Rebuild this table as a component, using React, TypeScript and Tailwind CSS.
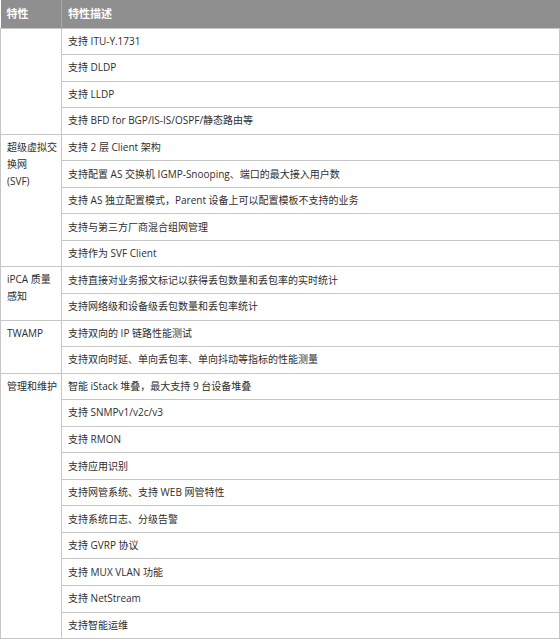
import React from "react";

type Group = { name: string[]; items: string[] };

const groups: Group[] = [
  {
    name: [],
    items: ["支持 ITU-Y.1731", "支持 DLDP", "支持 LLDP", "支持 BFD for BGP/IS-IS/OSPF/静态路由等"],
  },
  {
    name: ["超级虚拟交", "换网", "(SVF)"],
    items: [
      "支持 2 层 Client 架构",
      "支持配置 AS 交换机 IGMP-Snooping、端口的最大接入用户数",
      "支持 AS 独立配置模式，Parent 设备上可以配置模板不支持的业务",
      "支持与第三方厂商混合组网管理",
      "支持作为 SVF Client",
    ],
  },
  {
    name: ["iPCA 质量", "感知"],
    items: ["支持直接对业务报文标记以获得丢包数量和丢包率的实时统计", "支持网络级和设备级丢包数量和丢包率统计"],
  },
  {
    name: ["TWAMP"],
    items: ["支持双向的 IP 链路性能测试", "支持双向时延、单向丢包率、单向抖动等指标的性能测量"],
  },
  {
    name: ["管理和维护"],
    items: [
      "智能 iStack 堆叠，最大支持 9 台设备堆叠",
      "支持 SNMPv1/v2c/v3",
      "支持 RMON",
      "支持应用识别",
      "支持网管系统、支持 WEB 网管特性",
      "支持系统日志、分级告警",
      "支持 GVRP 协议",
      "支持 MUX VLAN 功能",
      "支持 NetStream",
      "支持智能运维",
    ],
  },
];

export default function App() {
  return (
    <div
      className="w-[560px] bg-white text-[#2e2e2e] text-[10px]"
      style={{ fontFamily: '"Open Sans", "Noto Sans CJK SC", sans-serif' }}
    >
      <table className="w-full border-collapse table-fixed">
        <colgroup>
          <col className="w-[61px]" />
          <col />
        </colgroup>
        <thead>
          <tr className="h-[28px] bg-[#8f8f8f] text-white text-[11px] font-bold">
            <th className="text-left pl-[6px] pr-0 border-r border-[#a8a8a8] font-bold">特性</th>
            <th className="text-left px-[6px] font-bold">特性描述</th>
          </tr>
        </thead>
        <tbody>
          {groups.map((g, gi) =>
            g.items.map((item, i) => (
              <tr key={`${gi}-${i}`} className="h-[26.56px]">
                {i === 0 && (
                  <td
                    rowSpan={g.items.length}
                    className="align-top border border-[#c6c6c6] pl-[6px] pr-0 pt-[4px] leading-[17px] whitespace-nowrap overflow-hidden"
                  >
                    {g.name.map((n) => (
                      <div key={n}>{n}</div>
                    ))}
                  </td>
                )}
                <td className="border border-[#c6c6c6] px-[6px] leading-[17px] whitespace-nowrap">{item}</td>
              </tr>
            ))
          )}
        </tbody>
      </table>
    </div>
  );
}
